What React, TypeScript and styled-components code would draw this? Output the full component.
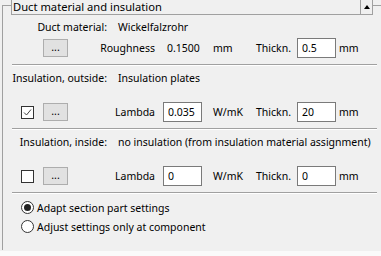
import styled, { createGlobalStyle } from "styled-components";

const GlobalStyle = createGlobalStyle`
  html, body {
    margin: 0;
    padding: 0;
    background: #fafafa;
  }
  body {
    font-family: "Noto Sans", "Open Sans", sans-serif;
    font-size: 10.5px;
    color: #000;
  }
`;

const Panel = styled.div`
  width: 381px;
  height: 251px;
  padding-top: 5px;
  box-sizing: border-box;
  background: #f0f0f0;
`;

const Frame = styled.section`
  height: 245px;
  margin-left: 2px;
  border-top: 1px solid #a0a0a0;
  border-left: 1px solid #a0a0a0;
  box-sizing: border-box;
`;

const Header = styled.header`
  display: flex;
  width: 362px;
  height: 15px;
  margin: -6px 0 0 8px;
  background: #f0f0f0;
  border-left: 1px solid #a0a0a0;
  border-bottom: 1px solid #a0a0a0;
  box-sizing: border-box;
`;

const HeaderTitle = styled.span`
  flex: 1;
  padding-left: 1px;
  font-size: 11.2px;
  line-height: 14px;
`;

const CollapseButton = styled.span`
  display: flex;
  align-items: center;
  justify-content: center;
  width: 13px;
  border-left: 1px solid #a0a0a0;
  border-right: 1px solid #a0a0a0;
  box-sizing: border-box;

  &::after {
    content: "";
    border-left: 3.5px solid transparent;
    border-right: 3.5px solid transparent;
    border-bottom: 4px solid #000;
  }
`;

const InfoRow = styled.div<{ $top: number }>`
  display: grid;
  grid-template-columns: 104px 1fr;
  column-gap: 11px;
  height: 15px;
  line-height: 15px;
  margin-top: ${(p) => p.$top}px;
  white-space: nowrap;
`;

const InfoLabel = styled.span`
  text-align: right;
`;

const ControlRow = styled.div<{ $top: number }>`
  display: grid;
  grid-template-columns: 40px 25px 95px 39px 54px 41px 39px auto;
  align-items: center;
  height: 20px;
  margin-top: ${(p) => p.$top}px;
  white-space: nowrap;
`;

const CheckSlot = styled.span`
  display: flex;
  padding-left: 18px;
`;

const CheckBox = styled.span`
  display: flex;
  align-items: center;
  justify-content: center;
  width: 13px;
  height: 13px;
  background: #fff;
  border: 1px solid #333;
  box-sizing: border-box;
`;

const DotsButton = styled.button`
  width: 25px;
  height: 18px;
  padding: 0 0 3px;
  font: inherit;
  line-height: 12px;
  color: #000;
  background: #e1e1e1;
  border: 1px solid #adadad;
  box-sizing: border-box;
`;

const FieldLabel = styled.span`
  padding-right: 8px;
  text-align: right;
`;

const ValueText = styled.span`
  padding-left: 4px;
`;

const UnitText = styled.span<{ $pad: number }>`
  padding-left: ${(p) => p.$pad}px;
`;

const NumberField = styled.input`
  width: 39px;
  height: 20px;
  padding: 0 0 0 4px;
  font: inherit;
  color: #000;
  background: #fff;
  border: 1px solid #7a7a7a;
  box-sizing: border-box;
  outline: none;
`;

const Separator = styled.hr<{ $top: number }>`
  height: 0;
  margin: ${(p) => p.$top}px 4px 0 9px;
  border: none;
  border-top: 1px solid #a0a0a0;
  border-bottom: 1px solid #fff;
`;

const RadioList = styled.div`
  display: flex;
  flex-direction: column;
  margin-top: 4px;
  padding-left: 18px;
`;

const RadioRow = styled.label`
  display: flex;
  align-items: center;
  gap: 3px;
  height: 19px;
`;

const RadioCircle = styled.span<{ $checked?: boolean }>`
  display: flex;
  align-items: center;
  justify-content: center;
  width: 13px;
  height: 13px;
  border: 1px solid #333;
  border-radius: 50%;
  background: #fff;
  box-sizing: border-box;

  &::after {
    content: "";
    display: ${(p) => (p.$checked ? "block" : "none")};
    width: 7px;
    height: 7px;
    border-radius: 50%;
    background: #222;
  }
`;

const CheckMark = () => (
  <svg width="9" height="9" viewBox="0 0 9 9">
    <polyline points="1,4.5 3.5,7 8,1.5" fill="none" stroke="#444" strokeWidth="1" />
  </svg>
);

const Check = ({ checked }: { checked: boolean }) => (
  <CheckSlot>
    <CheckBox>{checked && <CheckMark />}</CheckBox>
  </CheckSlot>
);

const InsulationRow = ({
  checked,
  lambda,
  thickness,
  top,
}: {
  checked: boolean;
  lambda: string;
  thickness: string;
  top: number;
}) => (
  <ControlRow $top={top}>
    <Check checked={checked} />
    <DotsButton>...</DotsButton>
    <FieldLabel>Lambda</FieldLabel>
    <NumberField defaultValue={lambda} />
    <UnitText $pad={11}>W/mK</UnitText>
    <span>Thickn.</span>
    <NumberField defaultValue={thickness} />
    <UnitText $pad={3}>mm</UnitText>
  </ControlRow>
);

export default function App() {
  return (
    <>
      <GlobalStyle />
      <Panel>
        <Frame>
          <Header>
            <HeaderTitle>Duct material and insulation</HeaderTitle>
            <CollapseButton />
          </Header>

          <InfoRow $top={5}>
            <InfoLabel>Duct material:</InfoLabel>
            <span>Wickelfalzrohr</span>
          </InfoRow>
          <ControlRow $top={3}>
            <span />
            <DotsButton>...</DotsButton>
            <FieldLabel>Roughness</FieldLabel>
            <ValueText>0.1500</ValueText>
            <UnitText $pad={11}>mm</UnitText>
            <span>Thickn.</span>
            <NumberField defaultValue="0.5" />
            <UnitText $pad={3}>mm</UnitText>
          </ControlRow>
          <Separator $top={6} />

          <InfoRow $top={5}>
            <InfoLabel>Insulation, outside:</InfoLabel>
            <span>Insulation plates</span>
          </InfoRow>
          <InsulationRow checked lambda="0.035" thickness="20" top={16} />
          <Separator $top={6} />

          <InfoRow $top={5}>
            <InfoLabel>Insulation, inside:</InfoLabel>
            <span>no insulation (from insulation material assignment)</span>
          </InfoRow>
          <InsulationRow checked={false} lambda="0" thickness="0" top={16} />
          <Separator $top={6} />

          <RadioList>
            <RadioRow>
              <RadioCircle $checked />
              Adapt section part settings
            </RadioRow>
            <RadioRow>
              <RadioCircle />
              Adjust settings only at component
            </RadioRow>
          </RadioList>
        </Frame>
      </Panel>
    </>
  );
}
